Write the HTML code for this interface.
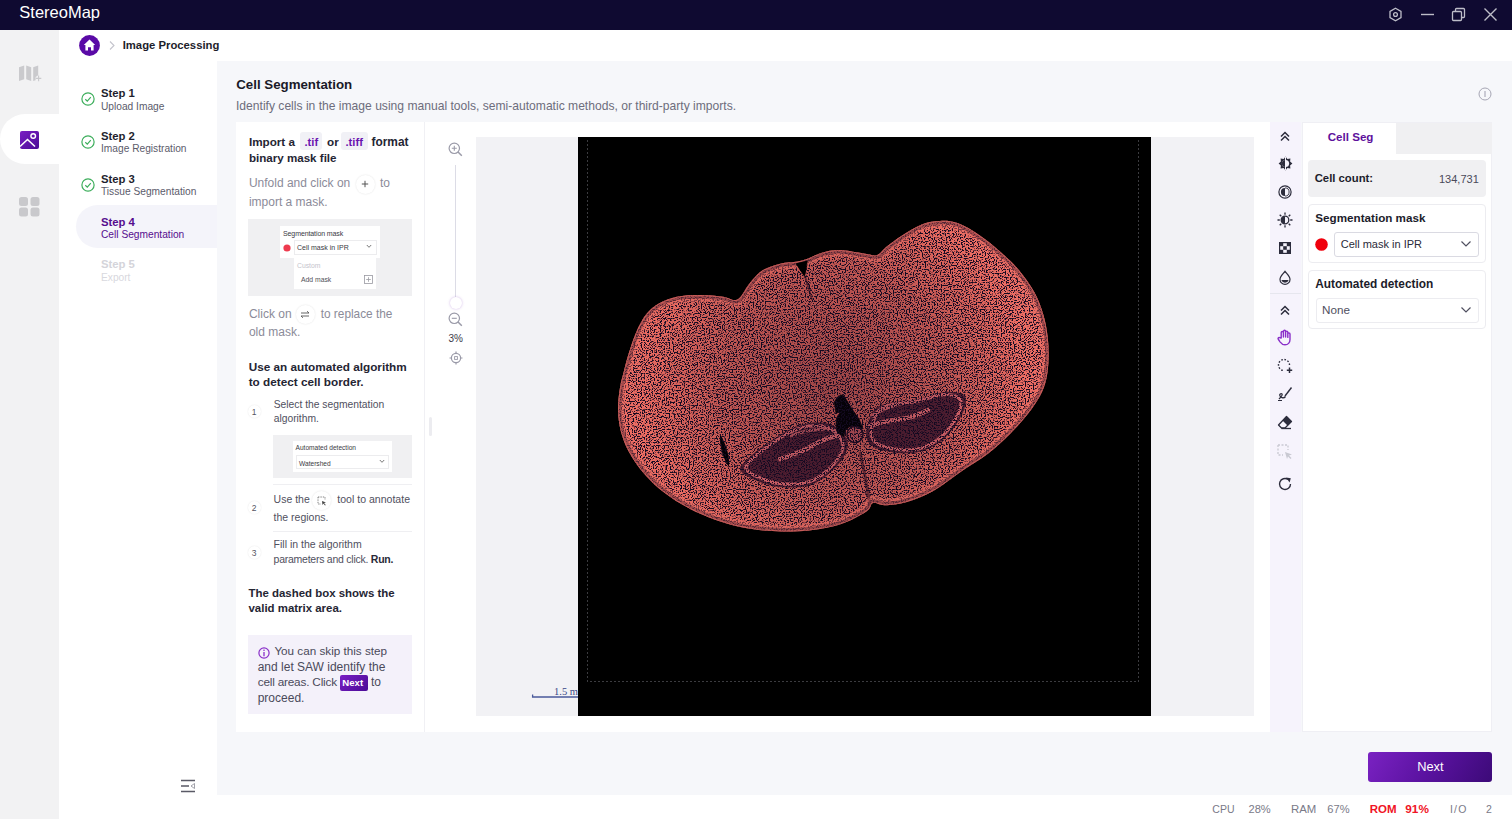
<!DOCTYPE html>
<html><head><meta charset="utf-8">
<style>
*{margin:0;padding:0;box-sizing:border-box}
html,body{width:1512px;height:819px;overflow:hidden;background:#f6f7fa;font-family:"Liberation Sans",sans-serif;color:#1f1f2e;position:relative}
.a{position:absolute}
.t{position:absolute;white-space:nowrap;line-height:1}
</style></head><body>
<div class="a" style="left:0px;top:0px;width:1512px;height:30px;background:#0f0a31"></div>
<div class="t" style="left:19.3px;top:4px;font-size:16.5px;font-weight:400;color:#ffffff;">StereoMap</div>
<svg class="a" style="left:1388px;top:7px;" width="15" height="15" viewBox="0 0 15 15"><path d="M7.5 1.2 L13 4.35 V10.65 L7.5 13.8 L2 10.65 V4.35 Z" fill="none" stroke="#bdbdc8" stroke-width="1.3"/><circle cx="7.5" cy="7.5" r="1.9" fill="none" stroke="#bdbdc8" stroke-width="1.3"/></svg>
<svg class="a" style="left:1420px;top:7px;" width="15" height="15" viewBox="0 0 15 15"><path d="M1 7.5 H14" stroke="#bdbdc8" stroke-width="1.4"/></svg>
<svg class="a" style="left:1451px;top:7px;" width="15" height="15" viewBox="0 0 15 15"><rect x="1.5" y="4.5" width="9" height="9" rx="1" fill="none" stroke="#bdbdc8" stroke-width="1.3"/><path d="M4.5 4.5 V2.5 a1 1 0 0 1 1 -1 H12.5 a1 1 0 0 1 1 1 V9.5 a1 1 0 0 1 -1 1 H10.5" fill="none" stroke="#bdbdc8" stroke-width="1.3"/></svg>
<svg class="a" style="left:1483px;top:7px;" width="15" height="15" viewBox="0 0 15 15"><path d="M1.5 1.5 L13.5 13.5 M13.5 1.5 L1.5 13.5" stroke="#bdbdc8" stroke-width="1.4"/></svg>
<div class="a" style="left:0px;top:30px;width:59px;height:789px;background:#f2f2f3"></div>
<div class="a" style="left:59px;top:30px;width:1453px;height:31px;background:#ffffff"></div>
<div class="a" style="left:59px;top:61px;width:158px;height:758px;background:#ffffff"></div>
<div class="a" style="left:217px;top:795px;width:1295px;height:24px;background:#ffffff"></div>
<svg class="a" style="left:0px;top:0px;" width="59" height="100" viewBox="0 0 59 100"><path d="M19 67.2 L24.2 65.4 V79.2 L19 81 Z M26.2 65.4 L31.2 67.2 V81 L26.2 79.2 Z M33.2 67.2 L38.2 65.4 V75.2 L35.6 77 V80.2 L33.2 81 Z" fill="#cacacd"/><path d="M38.6 75.6 V81.2 M35.9 78.4 H41.3" stroke="#cacacd" stroke-width="1.1"/></svg>
<div class="a" style="left:0px;top:114px;width:59px;height:50px;background:#ffffff;border-radius:25px 0 0 25px"></div>
<svg class="a" style="left:20px;top:131px;" width="19" height="18" viewBox="0 0 19 18"><defs><linearGradient id="gi" x1="0" y1="0" x2="1" y2="1"><stop offset="0" stop-color="#7a1fc4"/><stop offset="1" stop-color="#4a0b96"/></linearGradient></defs><rect x="0" y="0" width="19" height="18" rx="2" fill="url(#gi)"/><path d="M0 15.5 L7.5 8.5 L15 15.5" fill="none" stroke="#fff" stroke-width="1.6"/><circle cx="13.2" cy="5" r="2.3" fill="none" stroke="#fff" stroke-width="1.4"/></svg>
<svg class="a" style="left:19px;top:197px;" width="21" height="20" viewBox="0 0 21 20"><rect x="0" y="0" width="9" height="9" rx="2.5" fill="#c9c9cc"/><rect x="11.5" y="0" width="9" height="9" rx="2.5" fill="#c9c9cc"/><rect x="0" y="10.5" width="9" height="9" rx="2.5" fill="#c9c9cc"/><rect x="11.5" y="10.5" width="9" height="9" rx="2.5" fill="#c9c9cc"/></svg>
<svg class="a" style="left:79px;top:35px;" width="21" height="21" viewBox="0 0 21 21"><circle cx="10.5" cy="10.5" r="10.4" fill="#5a0aa6"/><path d="M10.5 4.6 L16.2 10 H14.6 V15.6 H12 V12.3 H9 V15.6 H6.4 V10 H4.8 Z" fill="#fff"/></svg>
<svg class="a" style="left:108px;top:40px;" width="8" height="11" viewBox="0 0 8 11"><path d="M2 1.5 L6 5.5 L2 9.5" fill="none" stroke="#c4c4cc" stroke-width="1.1"/></svg>
<div class="t" style="left:122.7px;top:40px;font-size:11.3px;font-weight:700;color:#1d1d2b;">Image Processing</div>
<svg class="a" style="left:81px;top:92.3px;" width="14" height="14" viewBox="0 0 14 14"><circle cx="7" cy="7" r="6.1" fill="none" stroke="#3dae5c" stroke-width="1.2"/><path d="M4.3 7.2 L6.3 9.1 L9.8 5.2" fill="none" stroke="#3dae5c" stroke-width="1.2"/></svg>
<div class="t" style="left:101.0px;top:88px;font-size:11.3px;font-weight:700;color:#1f1f2e;">Step 1</div>
<div class="t" style="left:101.0px;top:102px;font-size:10.2px;font-weight:400;color:#5b5b6b;">Upload Image</div>
<svg class="a" style="left:81px;top:135.1px;" width="14" height="14" viewBox="0 0 14 14"><circle cx="7" cy="7" r="6.1" fill="none" stroke="#3dae5c" stroke-width="1.2"/><path d="M4.3 7.2 L6.3 9.1 L9.8 5.2" fill="none" stroke="#3dae5c" stroke-width="1.2"/></svg>
<div class="t" style="left:101.0px;top:131px;font-size:11.3px;font-weight:700;color:#1f1f2e;">Step 2</div>
<div class="t" style="left:101.0px;top:144px;font-size:10.2px;font-weight:400;color:#5b5b6b;">Image Registration</div>
<svg class="a" style="left:81px;top:177.8px;" width="14" height="14" viewBox="0 0 14 14"><circle cx="7" cy="7" r="6.1" fill="none" stroke="#3dae5c" stroke-width="1.2"/><path d="M4.3 7.2 L6.3 9.1 L9.8 5.2" fill="none" stroke="#3dae5c" stroke-width="1.2"/></svg>
<div class="t" style="left:101.0px;top:174px;font-size:11.3px;font-weight:700;color:#1f1f2e;">Step 3</div>
<div class="t" style="left:101.0px;top:187px;font-size:10.2px;font-weight:400;color:#5b5b6b;">Tissue Segmentation</div>
<div class="a" style="left:76px;top:205px;width:141px;height:43px;background:#f4f4fa;border-radius:21.5px 0 0 21.5px"></div>
<div class="t" style="left:101.0px;top:217px;font-size:11.3px;font-weight:700;color:#560d8e;">Step 4</div>
<div class="t" style="left:101.0px;top:230px;font-size:10.2px;font-weight:400;color:#560d8e;">Cell Segmentation</div>
<div class="t" style="left:101.0px;top:259px;font-size:11.3px;font-weight:700;color:#d4d4da;">Step 5</div>
<div class="t" style="left:101.0px;top:273px;font-size:10.2px;font-weight:400;color:#d8d8de;">Export</div>
<svg class="a" style="left:180px;top:779px;" width="16" height="14" viewBox="0 0 16 14"><path d="M1 1.5 H15 M1 7 H9 M1 12.5 H15" stroke="#5a5a66" stroke-width="1.5"/><path d="M14.5 4.5 L11 7 L14.5 9.5 Z" fill="none" stroke="#8a8a96" stroke-width="0.8"/></svg>
<div class="t" style="left:236.2px;top:78px;font-size:13.3px;font-weight:700;color:#1a1a28;">Cell Segmentation</div>
<div class="t" style="left:236.0px;top:100px;font-size:12.1px;font-weight:400;color:#6d6d7c;">Identify cells in the image using manual tools, semi-automatic methods, or third-party imports.</div>
<svg class="a" style="left:1478px;top:87px;" width="14" height="14" viewBox="0 0 14 14"><circle cx="7" cy="7" r="6" fill="none" stroke="#a6a6b4" stroke-width="1"/><path d="M7 4 V10" stroke="#a6a6b4" stroke-width="1.1"/></svg>
<div class="a" style="left:236px;top:122px;width:1034px;height:610px;background:#ffffff"></div>
<div class="a" style="left:424px;top:122px;width:1px;height:610px;background:#f0f0f4"></div>
<div class="a" style="left:429px;top:417px;width:3px;height:19px;background:#ececf0;border-radius:2px"></div>
<div class="t" style="left:248.9px;top:136px;font-size:11.7px;font-weight:700;color:#252533;">Import a</div>
<div class="a" style="left:300px;top:132px;width:22px;height:18px;background:#f1f1f6;border-radius:3px"></div>
<div class="t" style="left:304.5px;top:137px;font-size:11.2px;font-weight:700;color:#6a14b0;">.tif</div>
<div class="t" style="left:327.0px;top:136px;font-size:11.7px;font-weight:700;color:#252533;">or</div>
<div class="a" style="left:341px;top:132px;width:27px;height:18px;background:#f1f1f6;border-radius:3px"></div>
<div class="t" style="left:345.5px;top:137px;font-size:11.2px;font-weight:700;color:#6a14b0;">.tiff</div>
<div class="t" style="left:371.5px;top:137px;font-size:11.9px;font-weight:700;color:#252533;">format</div>
<div class="t" style="left:248.9px;top:152px;font-size:11.6px;font-weight:700;color:#252533;">binary mask file</div>
<div class="t" style="left:248.9px;top:177px;font-size:12px;font-weight:400;color:#8b8b99;">Unfold and click on</div>
<div class="a" style="left:355.5px;top:174.5px;width:19px;height:19px;background:#fff;border-radius:50%;box-shadow:0 0 2px rgba(0,0,0,0.12)"></div>
<svg class="a" style="left:360px;top:179px;" width="10" height="10" viewBox="0 0 10 10"><path d="M5 1.8 V8.2 M1.8 5 H8.2" stroke="#555" stroke-width="1"/></svg>
<div class="t" style="left:380.0px;top:177px;font-size:12px;font-weight:400;color:#8b8b99;">to</div>
<div class="t" style="left:248.9px;top:196px;font-size:12px;font-weight:400;color:#8b8b99;">import a mask.</div>
<div class="a" style="left:248px;top:219px;width:164px;height:77px;background:#f0f0f2"></div>
<div class="a" style="left:280px;top:226px;width:100px;height:32px;background:#fff"></div>
<div class="a" style="left:294px;top:258px;width:82px;height:31px;background:#fff"></div>
<div class="t" style="left:283.0px;top:230px;font-size:7px;font-weight:400;color:#3a3a44;letter-spacing:-0.1px">Segmentation mask</div>
<svg class="a" style="left:282.5px;top:243.5px;" width="8" height="8" viewBox="0 0 8 8"><circle cx="4" cy="4" r="3.6" fill="#ee3b4f"/></svg>
<div class="a" style="left:293.5px;top:240px;width:83px;height:14.5px;border:1px solid #ececee;background:#fff"></div>
<div class="t" style="left:297.0px;top:244px;font-size:7px;font-weight:400;color:#3a3a44;">Cell mask in IPR</div>
<svg class="a" style="left:366px;top:244px;" width="6" height="5" viewBox="0 0 6 5"><path d="M0.8 1 L3 3.3 L5.2 1" fill="none" stroke="#555" stroke-width="0.8"/></svg>
<div class="t" style="left:297.0px;top:263px;font-size:6.8px;font-weight:400;color:#c4c4cc;">Custom</div>
<div class="t" style="left:301.0px;top:277px;font-size:6.8px;font-weight:400;color:#505058;">Add mask</div>
<svg class="a" style="left:363.5px;top:275px;" width="9" height="9" viewBox="0 0 9 9"><rect x="0.5" y="0.5" width="8" height="8" fill="none" stroke="#9a9aa2" stroke-width="0.8"/><path d="M4.5 2.2 V6.8 M2.2 4.5 H6.8" stroke="#9a9aa2" stroke-width="0.8"/></svg>
<div class="t" style="left:248.9px;top:308px;font-size:12px;font-weight:400;color:#8b8b99;">Click on</div>
<div class="a" style="left:295.5px;top:305px;width:19px;height:19px;background:#fff;border-radius:50%;box-shadow:0 0 2px rgba(0,0,0,0.12)"></div>
<svg class="a" style="left:299px;top:309px;" width="12" height="11" viewBox="0 0 12 11"><path d="M2 4 H10 L8 2.2 M10 7 H2 L4 8.8" fill="none" stroke="#555" stroke-width="0.9"/></svg>
<div class="t" style="left:320.7px;top:309px;font-size:11.85px;font-weight:400;color:#8b8b99;">to replace the</div>
<div class="t" style="left:248.9px;top:326px;font-size:12px;font-weight:400;color:#8b8b99;">old mask.</div>
<div class="t" style="left:248.7px;top:361px;font-size:11.75px;font-weight:700;color:#252533;">Use an automated algorithm</div>
<div class="t" style="left:248.7px;top:376px;font-size:11.75px;font-weight:700;color:#252533;">to detect cell border.</div>
<div class="a" style="left:247.5px;top:404.6px;width:13px;height:13px;background:#fff;border-radius:50%;box-shadow:0 0 1.5px rgba(0,0,0,0.12)"></div>
<div class="t" style="left:251.8px;top:408px;font-size:8.5px;font-weight:400;color:#555562;">1</div>
<div class="t" style="left:273.7px;top:400px;font-size:10.3px;font-weight:400;color:#50505e;">Select the segmentation</div>
<div class="t" style="left:273.7px;top:414px;font-size:10.3px;font-weight:400;color:#50505e;">algorithm.</div>
<div class="a" style="left:273px;top:435px;width:139px;height:43px;background:#f0f0f2"></div>
<div class="a" style="left:293px;top:441px;width:99px;height:31px;background:#fff"></div>
<div class="t" style="left:295.5px;top:445px;font-size:6.6px;font-weight:400;color:#3a3a44;">Automated detection</div>
<div class="a" style="left:295.5px;top:455px;width:93.5px;height:14px;border:1px solid #ececee;background:#fff"></div>
<div class="t" style="left:299.0px;top:461px;font-size:6.6px;font-weight:400;color:#3a3a44;">Watershed</div>
<svg class="a" style="left:379px;top:459px;" width="6" height="5" viewBox="0 0 6 5"><path d="M0.8 1 L3 3.3 L5.2 1" fill="none" stroke="#555" stroke-width="0.8"/></svg>
<div class="a" style="left:273px;top:484px;width:139px;height:1px;background:#efeff2"></div>
<div class="a" style="left:247.5px;top:501.2px;width:13px;height:13px;background:#fff;border-radius:50%;box-shadow:0 0 1.5px rgba(0,0,0,0.12)"></div>
<div class="t" style="left:251.8px;top:504px;font-size:8.5px;font-weight:400;color:#555562;">2</div>
<div class="t" style="left:273.6px;top:494px;font-size:10.5px;font-weight:400;color:#50505e;">Use the</div>
<div class="a" style="left:312px;top:491px;width:19px;height:19px;background:#fff;border-radius:50%;box-shadow:0 0 2px rgba(0,0,0,0.12)"></div>
<svg class="a" style="left:316.5px;top:495.5px;" width="10" height="10" viewBox="0 0 10 10"><path d="M1 1 H8 V4 M1 1 V8 H4" fill="none" stroke="#777" stroke-width="0.9" stroke-dasharray="1.4 1"/><path d="M5 5 L9 6.5 L7 7 L8.8 9 L8 9.5 L6.5 7.5 L5.5 9 Z" fill="#444"/></svg>
<div class="t" style="left:337.3px;top:494px;font-size:10.55px;font-weight:400;color:#50505e;">tool to annotate</div>
<div class="t" style="left:273.6px;top:512px;font-size:10.5px;font-weight:400;color:#50505e;">the regions.</div>
<div class="a" style="left:273px;top:531px;width:139px;height:1px;background:#efeff2"></div>
<div class="a" style="left:247.5px;top:545.5px;width:13px;height:13px;background:#fff;border-radius:50%;box-shadow:0 0 1.5px rgba(0,0,0,0.12)"></div>
<div class="t" style="left:251.8px;top:549px;font-size:8.5px;font-weight:400;color:#555562;">3</div>
<div class="t" style="left:273.6px;top:539px;font-size:10.5px;font-weight:400;color:#50505e;">Fill in the algorithm</div>
<div class="t" style="left:273.6px;top:554px;font-size:10.5px;font-weight:400;color:#50505e;letter-spacing:-0.25px">parameters and click. <b style="color:#2a2a38">Run.</b></div>
<div class="t" style="left:248.5px;top:588px;font-size:11.45px;font-weight:700;color:#252533;">The dashed box shows the</div>
<div class="t" style="left:248.5px;top:603px;font-size:11.45px;font-weight:700;color:#252533;">valid matrix area.</div>
<div class="a" style="left:248px;top:635px;width:164px;height:79px;background:#f4f1fa"></div>
<svg class="a" style="left:258px;top:647px;" width="12" height="12" viewBox="0 0 12 12"><circle cx="6" cy="6" r="5.1" fill="none" stroke="#8a2fc9" stroke-width="1.2"/><path d="M6 5 V9.2" stroke="#8a2fc9" stroke-width="1.3"/><circle cx="6" cy="3.3" r="0.8" fill="#8a2fc9"/></svg>
<div class="t" style="left:274.4px;top:645px;font-size:11.7px;font-weight:400;color:#4a4a5a;">You can skip this step</div>
<div class="t" style="left:257.7px;top:661px;font-size:12px;font-weight:400;color:#4a4a5a;">and let SAW identify the</div>
<div class="t" style="left:257.7px;top:677px;font-size:11.8px;font-weight:400;color:#4a4a5a;letter-spacing:-0.2px">cell areas. Click</div>
<div class="a" style="left:340px;top:675px;width:28px;height:15.5px;background:linear-gradient(135deg,#7a1fc4,#4a0b96);border-radius:2px"></div>
<div class="t" style="left:342.3px;top:678px;font-size:9.6px;font-weight:700;color:#ffffff;">Next</div>
<div class="t" style="left:371.0px;top:676px;font-size:12px;font-weight:400;color:#4a4a5a;">to</div>
<div class="t" style="left:257.7px;top:692px;font-size:12px;font-weight:400;color:#4a4a5a;">proceed.</div>
<svg class="a" style="left:448px;top:142px;" width="15" height="15" viewBox="0 0 15 15"><circle cx="6.3" cy="6.3" r="5.2" fill="none" stroke="#9a9aa8" stroke-width="1.2"/><path d="M10 10 L13.8 13.8" stroke="#9a9aa8" stroke-width="1.5"/><path d="M6.3 3.8 V8.8 M3.8 6.3 H8.8" stroke="#9a9aa8" stroke-width="1.1"/></svg>
<div class="a" style="left:455px;top:165px;width:1.2px;height:132px;background:#dcdce6"></div>
<div class="a" style="left:449.5px;top:296.5px;width:12px;height:12px;background:#fff;border-radius:50%;box-shadow:0 0 2.5px rgba(150,90,200,0.45)"></div>
<svg class="a" style="left:448px;top:312px;" width="15" height="15" viewBox="0 0 15 15"><circle cx="6.3" cy="6.3" r="5.2" fill="none" stroke="#9a9aa8" stroke-width="1.2"/><path d="M10 10 L13.8 13.8" stroke="#9a9aa8" stroke-width="1.5"/><path d="M3.8 6.3 H8.8" stroke="#9a9aa8" stroke-width="1.1"/></svg>
<div class="t" style="left:448.5px;top:334px;font-size:10px;font-weight:400;color:#3a3a48;">3%</div>
<svg class="a" style="left:448.5px;top:350.5px;" width="14" height="14" viewBox="0 0 14 14"><circle cx="7" cy="7" r="4.6" fill="none" stroke="#9a9aa8" stroke-width="1.2"/><rect x="5.6" y="5.6" width="2.8" height="2.8" fill="none" stroke="#9a9aa8" stroke-width="0.9"/><path d="M7 0.5 V2.6 M7 11.4 V13.5 M0.5 7 H2.6 M11.4 7 H13.5" stroke="#9a9aa8" stroke-width="1.2"/></svg>
<div class="a" style="left:476px;top:137px;width:778px;height:579px;background:#f2f2f5"></div>
<svg class="a" style="left:531px;top:684px;" width="50" height="16" viewBox="0 0 50 16"><path d="M1.6 10.5 V13 H48" fill="none" stroke="#4a5a9a" stroke-width="1.3"/></svg>
<div class="t" style="left:554.0px;top:687px;font-size:10.5px;font-weight:400;color:#3a4888;font-family:'Liberation Serif',serif">1.5 mm</div>
<div class="a" style="left:578px;top:137px;width:573px;height:579px;background:#000000"></div>
<svg class="a" style="left:578px;top:137px;" width="573" height="579" viewBox="0 0 573 579"><path d="M9.5 3.5 V544.5 H560.5 V3.5" fill="none" stroke="#76767e" stroke-width="1" stroke-dasharray="1 3"/></svg>
<svg class="a" style="left:578px;top:137px;" width="573" height="579" viewBox="578 137 573 579"><defs>
<clipPath id="tc"><path d="M618.0 409.6 C617.9 402.3 619.0 394.2 620.0 387.6 C621.0 381.0 622.8 375.6 624.2 370.0 C625.6 364.4 626.6 360.2 628.6 353.8 C630.6 347.4 633.4 338.5 636.3 331.9 C639.2 325.3 642.4 319.1 646.2 314.3 C650.0 309.5 654.2 306.2 659.3 303.3 C664.4 300.4 670.3 298.1 676.9 296.7 C683.5 295.3 691.2 294.9 698.9 294.9 C706.6 294.9 717.2 295.8 723.1 296.7 C729.0 297.6 731.2 300.0 734.1 300.0 C737.0 300.0 738.1 299.4 740.7 296.7 C743.3 293.9 745.9 287.9 749.5 283.5 C753.1 279.1 757.5 273.6 762.6 270.3 C767.7 267.0 774.3 265.2 780.2 263.7 C786.1 262.2 793.0 262.4 797.8 261.5 C802.6 260.6 804.8 259.7 808.8 258.2 C812.8 256.7 816.8 254.0 822.0 252.7 C827.2 251.3 832.8 249.9 840.0 250.1 C847.2 250.3 859.0 253.0 865.2 253.8 C871.4 254.6 873.6 256.2 877.3 254.9 C880.9 253.6 882.9 249.5 887.1 246.2 C891.3 242.9 896.6 238.9 902.5 235.2 C908.4 231.5 916.1 226.6 922.3 224.2 C928.5 221.8 934.0 221.1 939.9 220.9 C945.8 220.7 950.9 220.7 957.5 223.1 C964.1 225.5 972.2 230.3 979.5 235.2 C986.8 240.1 994.8 246.8 1001.4 252.7 C1008.0 258.6 1013.5 263.7 1019.0 270.3 C1024.5 276.9 1030.4 285.0 1034.4 292.3 C1038.4 299.6 1041.0 307.0 1043.2 314.3 C1045.4 321.6 1046.7 329.0 1047.6 336.3 C1048.5 343.6 1048.8 351.1 1048.6 358.0 C1048.4 364.9 1047.8 371.8 1046.5 378.0 C1045.2 384.2 1043.6 389.0 1040.5 395.0 C1037.4 401.0 1032.8 407.6 1027.8 414.0 C1022.8 420.4 1016.8 427.1 1010.2 433.7 C1003.6 440.3 996.2 447.3 988.2 453.5 C980.2 459.7 971.0 464.9 961.9 471.1 C952.8 477.3 942.5 485.8 933.3 490.9 C924.1 496.0 915.0 499.5 906.9 501.9 C898.8 504.3 890.6 505.0 884.9 505.2 C879.2 505.4 875.8 502.1 872.9 503.0 C870.0 503.9 871.6 507.6 867.4 510.7 C863.2 513.8 853.8 518.9 847.6 521.6 C841.4 524.3 836.5 525.6 830.0 527.1 C823.5 528.6 816.7 529.7 808.8 530.4 C800.9 531.1 791.6 531.7 782.4 531.5 C773.2 531.3 762.9 530.6 753.8 529.3 C744.6 528.0 735.9 526.2 727.5 523.8 C719.1 521.4 711.0 518.4 703.3 515.1 C695.6 511.8 688.6 508.5 681.3 504.1 C674.0 499.7 665.9 494.2 659.3 488.7 C652.7 483.2 646.9 477.3 641.8 471.1 C636.7 464.9 632.1 457.9 628.6 451.3 C625.1 444.7 622.7 438.4 620.9 431.5 C619.1 424.6 618.1 416.9 618.0 409.6 Z"/></clipPath>
<filter id="nz" x="578" y="137" width="573" height="579" filterUnits="userSpaceOnUse" color-interpolation-filters="sRGB">
<feTurbulence type="fractalNoise" baseFrequency="0.75" numOctaves="1" seed="11"/>
<feColorMatrix type="matrix" values="0 0 0 0 0.08  0 0 0 0 0.04  0 0 0 0 0.13  9 0 0 0 -4.45"/>
</filter>
<filter id="nz2" x="578" y="137" width="573" height="579" filterUnits="userSpaceOnUse" color-interpolation-filters="sRGB">
<feTurbulence type="fractalNoise" baseFrequency="0.03" numOctaves="2" seed="4"/>
<feColorMatrix type="matrix" values="0 0 0 0 0.05  0 0 0 0 0.02  0 0 0 0 0.08  1.0 0 0 0 -0.45"/>
</filter>
<radialGradient id="dk" cx="835" cy="385" r="190" gradientUnits="userSpaceOnUse"><stop offset="0" stop-color="#12061a" stop-opacity="0.32"/><stop offset="0.6" stop-color="#12061a" stop-opacity="0.18"/><stop offset="1" stop-color="#12061a" stop-opacity="0"/></radialGradient>
<radialGradient id="tg" cx="830" cy="390" r="230" gradientUnits="userSpaceOnUse">
<stop offset="0" stop-color="#e2645c"/><stop offset="0.75" stop-color="#ea6a60"/><stop offset="1" stop-color="#f07066"/></radialGradient>
</defs>
<g clip-path="url(#tc)">
<rect x="600" y="210" width="460" height="330" fill="url(#tg)"/>

<path d="M740.6 471.1 C743.2 475.1 755.0 480.5 763.0 483.2 C771.0 485.9 780.2 487.5 788.8 487.5 C797.4 487.5 806.6 486.8 814.6 483.2 C822.6 479.6 831.5 471.7 837.0 466.0 C842.5 460.3 845.9 453.7 847.3 448.8 C848.7 443.9 848.1 440.8 845.5 436.8 C842.9 432.8 837.8 427.0 831.8 424.7 C825.8 422.4 816.6 422.1 809.4 423.0 C802.2 423.9 796.2 426.2 788.8 429.9 C781.3 433.6 771.6 440.4 764.7 445.3 C757.8 450.2 751.5 454.8 747.5 459.1 C743.5 463.4 738.0 467.1 740.6 471.1 Z" fill="#5a2234"/><path d="M746.4 469.5 C748.7 473.1 759.3 477.9 766.5 480.4 C773.8 482.8 782.0 484.2 789.7 484.2 C797.5 484.2 805.7 483.6 813.0 480.4 C820.2 477.1 828.2 470.0 833.1 464.9 C838.0 459.7 841.1 453.8 842.4 449.4 C843.7 445.0 843.1 442.2 840.8 438.6 C838.4 435.0 833.9 429.8 828.4 427.7 C823.0 425.6 814.7 425.4 808.3 426.2 C801.8 427.0 796.5 429.1 789.7 432.4 C783.0 435.7 774.2 441.9 768.1 446.3 C761.9 450.6 756.2 454.8 752.6 458.7 C749.0 462.5 744.0 465.9 746.4 469.5 Z" fill="none" stroke="#f07074" stroke-width="3.2"/><path d="M866.2 431.6 C866.8 425.6 870.5 414.1 874.8 409.2 C879.1 404.3 884.8 404.1 892.0 402.4 C899.2 400.7 909.2 400.6 917.8 398.9 C926.4 397.2 936.4 392.9 943.6 392.0 C950.8 391.1 957.1 392.1 960.8 393.8 C964.5 395.5 966.6 397.5 966.0 402.4 C965.4 407.3 961.6 416.4 957.3 423.0 C953.0 429.6 946.7 437.0 940.1 441.9 C933.5 446.8 925.8 450.5 917.8 452.2 C909.8 453.9 899.8 453.3 892.0 452.2 C884.2 451.1 875.6 448.7 871.3 445.3 C867.0 441.9 865.6 437.6 866.2 431.6 Z" fill="#5a2234"/><path d="M871.2 430.5 C871.8 425.1 875.1 414.7 879.0 410.3 C882.9 405.9 888.0 405.7 894.5 404.2 C900.9 402.7 909.9 402.6 917.7 401.1 C925.4 399.5 934.5 395.6 940.9 394.8 C947.4 394.1 953.0 394.9 956.4 396.5 C959.7 398.0 961.6 399.8 961.1 404.2 C960.5 408.6 957.1 416.8 953.2 422.7 C949.3 428.7 943.7 435.4 937.8 439.8 C931.8 444.1 924.9 447.5 917.7 449.0 C910.5 450.6 901.4 450.1 894.5 449.0 C887.5 448.0 879.7 445.9 875.8 442.8 C872.0 439.7 870.7 435.9 871.2 430.5 Z" fill="none" stroke="#f07074" stroke-width="3.2"/><path d="M780 459 C792 455 802 452 812 446 C822 440 830 437 836 436" fill="none" stroke="#f07074" stroke-width="4.5" stroke-linecap="round"/><path d="M790 436 C805 430 822 428 836 430" fill="none" stroke="#f07074" stroke-width="3" opacity="0.8"/><path d="M870 426 C882 421 896 420 908 418 C916 416 922 413 928 410" fill="none" stroke="#f07074" stroke-width="4.5" stroke-linecap="round"/><path d="M872 416 C882 408 896 404 912 401" fill="none" stroke="#f07074" stroke-width="3.5" opacity="0.9" stroke-linecap="round"/><path d="M841 395 L844 396 L852 409 L859 419 L863 429 L856 426 L849 427 L845 431 L843.8 436.6 L838 433 L836 425 L836.5 418 L840.6 412 L836 413 L834.3 402 L837.5 397 Z" fill="#000" stroke="#000" stroke-width="0.8" stroke-linejoin="round"/><circle cx="855" cy="434.5" r="8" fill="#d05c60" stroke="#2a0c20" stroke-width="1.5"/><path d="M720 434 C726 444 730 456 729 467 C724 460 719 448 720 434 Z" fill="#000"/><path d="M796 263 L808 261 L805 276 Z" fill="#000"/><path d="M805 276 L812 300" stroke="#3a1020" stroke-width="2" opacity="0.6"/><path d="M860 452 C864 470 868 490 870 508" stroke="#3a1020" stroke-width="3" fill="none" opacity="0.6"/><rect x="600" y="210" width="460" height="330" fill="url(#dk)"/><rect x="600" y="210" width="460" height="330" fill="#000" filter="url(#nz)"/><path d="M618.0 409.6 C617.9 402.3 619.0 394.2 620.0 387.6 C621.0 381.0 622.8 375.6 624.2 370.0 C625.6 364.4 626.6 360.2 628.6 353.8 C630.6 347.4 633.4 338.5 636.3 331.9 C639.2 325.3 642.4 319.1 646.2 314.3 C650.0 309.5 654.2 306.2 659.3 303.3 C664.4 300.4 670.3 298.1 676.9 296.7 C683.5 295.3 691.2 294.9 698.9 294.9 C706.6 294.9 717.2 295.8 723.1 296.7 C729.0 297.6 731.2 300.0 734.1 300.0 C737.0 300.0 738.1 299.4 740.7 296.7 C743.3 293.9 745.9 287.9 749.5 283.5 C753.1 279.1 757.5 273.6 762.6 270.3 C767.7 267.0 774.3 265.2 780.2 263.7 C786.1 262.2 793.0 262.4 797.8 261.5 C802.6 260.6 804.8 259.7 808.8 258.2 C812.8 256.7 816.8 254.0 822.0 252.7 C827.2 251.3 832.8 249.9 840.0 250.1 C847.2 250.3 859.0 253.0 865.2 253.8 C871.4 254.6 873.6 256.2 877.3 254.9 C880.9 253.6 882.9 249.5 887.1 246.2 C891.3 242.9 896.6 238.9 902.5 235.2 C908.4 231.5 916.1 226.6 922.3 224.2 C928.5 221.8 934.0 221.1 939.9 220.9 C945.8 220.7 950.9 220.7 957.5 223.1 C964.1 225.5 972.2 230.3 979.5 235.2 C986.8 240.1 994.8 246.8 1001.4 252.7 C1008.0 258.6 1013.5 263.7 1019.0 270.3 C1024.5 276.9 1030.4 285.0 1034.4 292.3 C1038.4 299.6 1041.0 307.0 1043.2 314.3 C1045.4 321.6 1046.7 329.0 1047.6 336.3 C1048.5 343.6 1048.8 351.1 1048.6 358.0 C1048.4 364.9 1047.8 371.8 1046.5 378.0 C1045.2 384.2 1043.6 389.0 1040.5 395.0 C1037.4 401.0 1032.8 407.6 1027.8 414.0 C1022.8 420.4 1016.8 427.1 1010.2 433.7 C1003.6 440.3 996.2 447.3 988.2 453.5 C980.2 459.7 971.0 464.9 961.9 471.1 C952.8 477.3 942.5 485.8 933.3 490.9 C924.1 496.0 915.0 499.5 906.9 501.9 C898.8 504.3 890.6 505.0 884.9 505.2 C879.2 505.4 875.8 502.1 872.9 503.0 C870.0 503.9 871.6 507.6 867.4 510.7 C863.2 513.8 853.8 518.9 847.6 521.6 C841.4 524.3 836.5 525.6 830.0 527.1 C823.5 528.6 816.7 529.7 808.8 530.4 C800.9 531.1 791.6 531.7 782.4 531.5 C773.2 531.3 762.9 530.6 753.8 529.3 C744.6 528.0 735.9 526.2 727.5 523.8 C719.1 521.4 711.0 518.4 703.3 515.1 C695.6 511.8 688.6 508.5 681.3 504.1 C674.0 499.7 665.9 494.2 659.3 488.7 C652.7 483.2 646.9 477.3 641.8 471.1 C636.7 464.9 632.1 457.9 628.6 451.3 C625.1 444.7 622.7 438.4 620.9 431.5 C619.1 424.6 618.1 416.9 618.0 409.6 Z" fill="none" stroke="#e86c64" stroke-width="13" opacity="0.45"/><path d="M618.0 409.6 C617.9 402.3 619.0 394.2 620.0 387.6 C621.0 381.0 622.8 375.6 624.2 370.0 C625.6 364.4 626.6 360.2 628.6 353.8 C630.6 347.4 633.4 338.5 636.3 331.9 C639.2 325.3 642.4 319.1 646.2 314.3 C650.0 309.5 654.2 306.2 659.3 303.3 C664.4 300.4 670.3 298.1 676.9 296.7 C683.5 295.3 691.2 294.9 698.9 294.9 C706.6 294.9 717.2 295.8 723.1 296.7 C729.0 297.6 731.2 300.0 734.1 300.0 C737.0 300.0 738.1 299.4 740.7 296.7 C743.3 293.9 745.9 287.9 749.5 283.5 C753.1 279.1 757.5 273.6 762.6 270.3 C767.7 267.0 774.3 265.2 780.2 263.7 C786.1 262.2 793.0 262.4 797.8 261.5 C802.6 260.6 804.8 259.7 808.8 258.2 C812.8 256.7 816.8 254.0 822.0 252.7 C827.2 251.3 832.8 249.9 840.0 250.1 C847.2 250.3 859.0 253.0 865.2 253.8 C871.4 254.6 873.6 256.2 877.3 254.9 C880.9 253.6 882.9 249.5 887.1 246.2 C891.3 242.9 896.6 238.9 902.5 235.2 C908.4 231.5 916.1 226.6 922.3 224.2 C928.5 221.8 934.0 221.1 939.9 220.9 C945.8 220.7 950.9 220.7 957.5 223.1 C964.1 225.5 972.2 230.3 979.5 235.2 C986.8 240.1 994.8 246.8 1001.4 252.7 C1008.0 258.6 1013.5 263.7 1019.0 270.3 C1024.5 276.9 1030.4 285.0 1034.4 292.3 C1038.4 299.6 1041.0 307.0 1043.2 314.3 C1045.4 321.6 1046.7 329.0 1047.6 336.3 C1048.5 343.6 1048.8 351.1 1048.6 358.0 C1048.4 364.9 1047.8 371.8 1046.5 378.0 C1045.2 384.2 1043.6 389.0 1040.5 395.0 C1037.4 401.0 1032.8 407.6 1027.8 414.0 C1022.8 420.4 1016.8 427.1 1010.2 433.7 C1003.6 440.3 996.2 447.3 988.2 453.5 C980.2 459.7 971.0 464.9 961.9 471.1 C952.8 477.3 942.5 485.8 933.3 490.9 C924.1 496.0 915.0 499.5 906.9 501.9 C898.8 504.3 890.6 505.0 884.9 505.2 C879.2 505.4 875.8 502.1 872.9 503.0 C870.0 503.9 871.6 507.6 867.4 510.7 C863.2 513.8 853.8 518.9 847.6 521.6 C841.4 524.3 836.5 525.6 830.0 527.1 C823.5 528.6 816.7 529.7 808.8 530.4 C800.9 531.1 791.6 531.7 782.4 531.5 C773.2 531.3 762.9 530.6 753.8 529.3 C744.6 528.0 735.9 526.2 727.5 523.8 C719.1 521.4 711.0 518.4 703.3 515.1 C695.6 511.8 688.6 508.5 681.3 504.1 C674.0 499.7 665.9 494.2 659.3 488.7 C652.7 483.2 646.9 477.3 641.8 471.1 C636.7 464.9 632.1 457.9 628.6 451.3 C625.1 444.7 622.7 438.4 620.9 431.5 C619.1 424.6 618.1 416.9 618.0 409.6 Z" fill="none" stroke="#1a0a20" stroke-width="7" opacity="0.35"/><path d="M618.0 409.6 C617.9 402.3 619.0 394.2 620.0 387.6 C621.0 381.0 622.8 375.6 624.2 370.0 C625.6 364.4 626.6 360.2 628.6 353.8 C630.6 347.4 633.4 338.5 636.3 331.9 C639.2 325.3 642.4 319.1 646.2 314.3 C650.0 309.5 654.2 306.2 659.3 303.3 C664.4 300.4 670.3 298.1 676.9 296.7 C683.5 295.3 691.2 294.9 698.9 294.9 C706.6 294.9 717.2 295.8 723.1 296.7 C729.0 297.6 731.2 300.0 734.1 300.0 C737.0 300.0 738.1 299.4 740.7 296.7 C743.3 293.9 745.9 287.9 749.5 283.5 C753.1 279.1 757.5 273.6 762.6 270.3 C767.7 267.0 774.3 265.2 780.2 263.7 C786.1 262.2 793.0 262.4 797.8 261.5 C802.6 260.6 804.8 259.7 808.8 258.2 C812.8 256.7 816.8 254.0 822.0 252.7 C827.2 251.3 832.8 249.9 840.0 250.1 C847.2 250.3 859.0 253.0 865.2 253.8 C871.4 254.6 873.6 256.2 877.3 254.9 C880.9 253.6 882.9 249.5 887.1 246.2 C891.3 242.9 896.6 238.9 902.5 235.2 C908.4 231.5 916.1 226.6 922.3 224.2 C928.5 221.8 934.0 221.1 939.9 220.9 C945.8 220.7 950.9 220.7 957.5 223.1 C964.1 225.5 972.2 230.3 979.5 235.2 C986.8 240.1 994.8 246.8 1001.4 252.7 C1008.0 258.6 1013.5 263.7 1019.0 270.3 C1024.5 276.9 1030.4 285.0 1034.4 292.3 C1038.4 299.6 1041.0 307.0 1043.2 314.3 C1045.4 321.6 1046.7 329.0 1047.6 336.3 C1048.5 343.6 1048.8 351.1 1048.6 358.0 C1048.4 364.9 1047.8 371.8 1046.5 378.0 C1045.2 384.2 1043.6 389.0 1040.5 395.0 C1037.4 401.0 1032.8 407.6 1027.8 414.0 C1022.8 420.4 1016.8 427.1 1010.2 433.7 C1003.6 440.3 996.2 447.3 988.2 453.5 C980.2 459.7 971.0 464.9 961.9 471.1 C952.8 477.3 942.5 485.8 933.3 490.9 C924.1 496.0 915.0 499.5 906.9 501.9 C898.8 504.3 890.6 505.0 884.9 505.2 C879.2 505.4 875.8 502.1 872.9 503.0 C870.0 503.9 871.6 507.6 867.4 510.7 C863.2 513.8 853.8 518.9 847.6 521.6 C841.4 524.3 836.5 525.6 830.0 527.1 C823.5 528.6 816.7 529.7 808.8 530.4 C800.9 531.1 791.6 531.7 782.4 531.5 C773.2 531.3 762.9 530.6 753.8 529.3 C744.6 528.0 735.9 526.2 727.5 523.8 C719.1 521.4 711.0 518.4 703.3 515.1 C695.6 511.8 688.6 508.5 681.3 504.1 C674.0 499.7 665.9 494.2 659.3 488.7 C652.7 483.2 646.9 477.3 641.8 471.1 C636.7 464.9 632.1 457.9 628.6 451.3 C625.1 444.7 622.7 438.4 620.9 431.5 C619.1 424.6 618.1 416.9 618.0 409.6 Z" fill="none" stroke="#e86c64" stroke-width="2" opacity="0.6"/><path d="M795.5 263.5 L807.5 260.5 L804.5 277 Z" fill="#000"/></g></svg>
<div class="a" style="left:1270px;top:122px;width:31px;height:610px;background:#f6f3fc"></div>
<div class="a" style="left:1270px;top:293px;width:31px;height:1px;background:#e6e6ee"></div>
<svg class="a" style="left:1279px;top:130px;" width="12" height="12" viewBox="0 0 12 12"><path d="M2 6.5 L6 2.5 L10 6.5 M2 10.5 L6 6.5 L10 10.5" fill="none" stroke="#2c2c3c" stroke-width="1.5"/></svg>
<svg class="a" style="left:1277.5px;top:156px;" width="15" height="15" viewBox="0 0 15 15"><path d="M7.5 0.6 L9.4 2.9 L12.4 2.6 L12.1 5.6 L14.4 7.5 L12.1 9.4 L12.4 12.4 L9.4 12.1 L7.5 14.4 L5.6 12.1 L2.6 12.4 L2.9 9.4 L0.6 7.5 L2.9 5.6 L2.6 2.6 L5.6 2.9 Z" fill="#2c2c3c"/><circle cx="7.5" cy="7.5" r="3.6" fill="#f6f3fc"/><path d="M7.5 3.9 A3.6 3.6 0 0 0 7.5 11.1 Z" fill="#2c2c3c"/><path d="M7.5 1 V14" stroke="#f6f3fc" stroke-width="1"/></svg>
<svg class="a" style="left:1278px;top:185px;" width="14" height="14" viewBox="0 0 14 14"><circle cx="7" cy="7" r="6.1" fill="none" stroke="#2c2c3c" stroke-width="1.2"/><path d="M7 2.9 A4.1 4.1 0 0 0 7 11.1 Z" fill="#2c2c3c"/><path d="M7 2.9 A4.1 4.1 0 0 1 7 11.1" fill="none" stroke="#2c2c3c" stroke-width="0.9"/></svg>
<svg class="a" style="left:1277px;top:212px;" width="16" height="16" viewBox="0 0 16 16"><circle cx="8" cy="8" r="3.8" fill="none" stroke="#2c2c3c" stroke-width="1.3"/><path d="M8 4.2 A3.8 3.8 0 0 0 8 11.8 Z" fill="#2c2c3c"/><path d="M8 0.5 V2.8 M8 13.2 V15.5 M0.5 8 H2.8 M13.2 8 H15.5 M2.7 2.7 L4.3 4.3 M11.7 11.7 L13.3 13.3 M2.7 13.3 L4.3 11.7 M11.7 4.3 L13.3 2.7" stroke="#2c2c3c" stroke-width="1.3"/></svg>
<svg class="a" style="left:1279px;top:242px;" width="12" height="12" viewBox="0 0 12 12"><rect x="0.6" y="0.6" width="10.8" height="10.8" fill="none" stroke="#2c2c3c" stroke-width="1.2"/><rect x="0.6" y="0.6" width="3.6" height="3.6" fill="#2c2c3c"/><rect x="7.8" y="0.6" width="3.6" height="3.6" fill="#2c2c3c"/><rect x="4.2" y="4.2" width="3.6" height="3.6" fill="#2c2c3c"/><rect x="0.6" y="7.8" width="3.6" height="3.6" fill="#2c2c3c"/><rect x="7.8" y="7.8" width="3.6" height="3.6" fill="#2c2c3c"/></svg>
<svg class="a" style="left:1278px;top:270px;" width="14" height="15" viewBox="0 0 14 15"><path d="M7 1.3 C8.8 3.8 12 6.2 12 9.4 A5 5 0 0 1 2 9.4 C2 6.2 5.2 3.8 7 1.3 Z" fill="none" stroke="#2c2c3c" stroke-width="1.2"/><path d="M3.3 10 H10.7 A3.9 3.9 0 0 1 3.3 10 Z" fill="#2c2c3c"/></svg>
<svg class="a" style="left:1279px;top:304px;" width="12" height="12" viewBox="0 0 12 12"><path d="M2 6.5 L6 2.5 L10 6.5 M2 10.5 L6 6.5 L10 10.5" fill="none" stroke="#2c2c3c" stroke-width="1.5"/></svg>
<svg class="a" style="left:1277px;top:329px;" width="16" height="17" viewBox="0 0 16 17"><path d="M4.2 9 V3.6 a1.1 1.1 0 0 1 2.2 0 V8 V2.4 a1.1 1.1 0 0 1 2.2 0 V8 V3.2 a1.1 1.1 0 0 1 2.2 0 V8.4 V5 a1.1 1.1 0 0 1 2.2 0 V10.5 C13 13.8 11 15.8 8 15.8 C5.5 15.8 4.5 14.8 3 12.8 L1.2 10 a1.1 1.1 0 0 1 1.8 -1.2 Z" fill="none" stroke="#8a2fc9" stroke-width="1.4" stroke-linejoin="round"/></svg>
<svg class="a" style="left:1277px;top:358px;" width="16" height="16" viewBox="0 0 16 16"><path d="M12.5 7 A5.5 5.5 0 1 0 7 12.5" fill="none" stroke="#2c2c3c" stroke-width="1.4" stroke-dasharray="1.6 1.6"/><path d="M12.5 9.5 V15 M9.8 12.2 H15.2" stroke="#2c2c3c" stroke-width="1.5"/></svg>
<svg class="a" style="left:1277px;top:386px;" width="16" height="16" viewBox="0 0 16 16"><path d="M14.5 1.5 L8 10" stroke="#2c2c3c" stroke-width="1.4"/><path d="M2 13 C4 11 6 9 5 8 C4 7 2 8.5 3 10 C4 12 7 12.5 8.5 10.5" fill="none" stroke="#2c2c3c" stroke-width="1.3"/><path d="M1 14.5 H5" stroke="#2c2c3c" stroke-width="1"/></svg>
<svg class="a" style="left:1277px;top:415px;" width="16" height="15" viewBox="0 0 16 15"><path d="M9.5 1.5 L14.5 6.5 L8 13 H4.5 L1.5 10 Z" fill="none" stroke="#2c2c3c" stroke-width="1.3" stroke-linejoin="round"/><path d="M9.5 1.5 L14.5 6.5 L10.5 10.5 L5.5 5.5 Z" fill="#2c2c3c"/><path d="M4.5 13.5 H14" stroke="#2c2c3c" stroke-width="1.3"/></svg>
<svg class="a" style="left:1277px;top:444px;" width="16" height="16" viewBox="0 0 16 16"><path d="M1 1 H11 V6 M1 1 V11 H6" fill="none" stroke="#c9c9d2" stroke-width="1.3" stroke-dasharray="2 1.5"/><path d="M8 8 L15 10.5 L12 11.5 L14.5 14 L13.5 15 L11 12.5 L10 15 Z" fill="#c9c9d2"/></svg>
<svg class="a" style="left:1277px;top:476px;" width="16" height="16" viewBox="0 0 16 16"><path d="M13.5 8 A5.5 5.5 0 1 1 11 3.4" fill="none" stroke="#2c2c3c" stroke-width="1.4"/><path d="M9 1.5 L13.8 2.2 L12.6 6.6 Z" fill="#2c2c3c"/></svg>
<div class="a" style="left:1302px;top:122px;width:190px;height:610px;background:#ffffff;border:1px solid #efeff4"></div>
<div class="a" style="left:1396px;top:123px;width:96px;height:31px;background:#f0f0f2"></div>
<div class="t" style="left:1327.7px;top:131px;font-size:11.6px;font-weight:700;color:#5e119c;">Cell Seg</div>
<div class="a" style="left:1308px;top:160px;width:178px;height:37px;background:#f0f0f2;border-radius:4px"></div>
<div class="t" style="left:1314.7px;top:173px;font-size:11.3px;font-weight:700;color:#1c1c2a;">Cell count:</div>
<div class="t" style="left:1439.0px;top:174px;font-size:11px;font-weight:400;color:#4a4a5a;">134,731</div>
<div class="a" style="left:1308px;top:204px;width:178px;height:59px;border:1px solid #ececf0;border-radius:4px;background:#fff"></div>
<div class="t" style="left:1315.3px;top:212px;font-size:11.66px;font-weight:700;color:#1c1c2a;">Segmentation mask</div>
<svg class="a" style="left:1315px;top:238px;" width="13" height="13" viewBox="0 0 13 13"><circle cx="6.5" cy="6.5" r="6.3" fill="#f0000c"/></svg>
<div class="a" style="left:1334px;top:231.5px;width:145px;height:25px;border:1px solid #dadae2;border-radius:3px;background:#fff"></div>
<div class="t" style="left:1340.7px;top:239px;font-size:11px;font-weight:400;color:#2a2a38;">Cell mask in IPR</div>
<svg class="a" style="left:1460px;top:240px;" width="12" height="8" viewBox="0 0 12 8"><path d="M1.5 1.5 L6 6 L10.5 1.5" fill="none" stroke="#505060" stroke-width="1.2"/></svg>
<div class="a" style="left:1308px;top:270px;width:178px;height:59px;border:1px solid #ececf0;border-radius:4px;background:#fff"></div>
<div class="t" style="left:1315.3px;top:279px;font-size:11.87px;font-weight:700;color:#1c1c2a;">Automated detection</div>
<div class="a" style="left:1315.5px;top:297.5px;width:163px;height:25px;border:1px solid #ececf0;border-radius:3px;background:#fff"></div>
<div class="t" style="left:1322.0px;top:304px;font-size:11.7px;font-weight:400;color:#505060;">None</div>
<svg class="a" style="left:1460px;top:306px;" width="12" height="8" viewBox="0 0 12 8"><path d="M1.5 1.5 L6 6 L10.5 1.5" fill="none" stroke="#505060" stroke-width="1.2"/></svg>
<div class="a" style="left:1368px;top:752px;width:124px;height:30px;background:linear-gradient(120deg,#7a22c2 0%,#5a12a0 50%,#3c0a78 100%);border-radius:3px"></div>
<div class="t" style="left:1417.2px;top:761px;font-size:12.8px;font-weight:400;color:#ffffff;">Next</div>
<div class="t" style="left:1212.3px;top:804px;font-size:10.5px;font-weight:400;color:#7a7a88;">CPU</div>
<div class="t" style="left:1248.5px;top:804px;font-size:11.1px;font-weight:400;color:#7a7a88;">28%</div>
<div class="t" style="left:1291.0px;top:804px;font-size:11.4px;font-weight:400;color:#7a7a88;">RAM</div>
<div class="t" style="left:1327.3px;top:804px;font-size:11.1px;font-weight:400;color:#7a7a88;">67%</div>
<div class="t" style="left:1369.8px;top:804px;font-size:11.5px;font-weight:700;color:#f01426;">ROM</div>
<div class="t" style="left:1405.3px;top:804px;font-size:11.8px;font-weight:700;color:#f01426;">91%</div>
<div class="t" style="left:1450.0px;top:804px;font-size:10.5px;font-weight:400;color:#7a7a88;letter-spacing:1.2px">I/O</div>
<div class="t" style="left:1486.0px;top:804px;font-size:10.5px;font-weight:400;color:#7a7a88;">2</div>
</body></html>
